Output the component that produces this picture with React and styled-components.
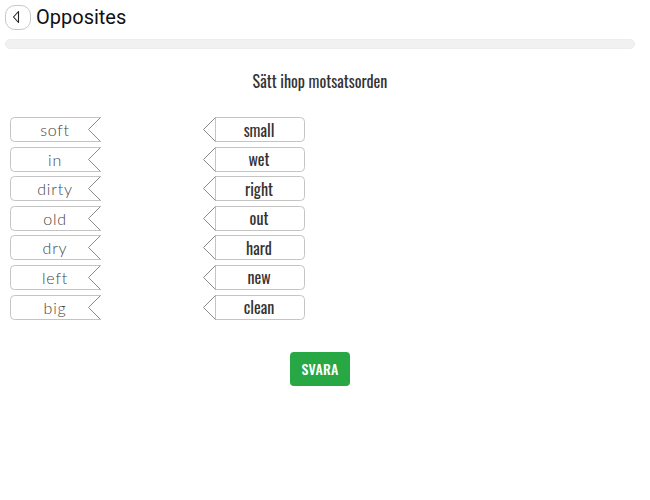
import React from "react";
import styled, { createGlobalStyle } from "styled-components";

const Global = createGlobalStyle`
  html, body { margin: 0; padding: 0; background: #fff; }
  body { font-family: Roboto, "Liberation Sans", sans-serif; }
`;

const Page = styled.div`
  padding: 4px 15px 0 5px;
  display: flex;
  flex-direction: column;
`;

const Header = styled.div`
  display: flex;
  align-items: center;
  gap: 5px;
  height: 26px;
`;

const BackButton = styled.button`
  width: 26px;
  height: 25px;
  border: 1px solid #c8c8c8;
  border-radius: 10px;
  background: #fff;
  padding: 0;
  display: flex;
  align-items: center;
  justify-content: center;
`;

const Title = styled.h1`
  margin: 0;
  font-family: Roboto, "Liberation Sans", sans-serif;
  font-weight: 400;
  font-size: 20px;
  color: #111;
  line-height: 26px;
`;

const Progress = styled.div`
  margin-top: 9px;
  height: 10px;
  border-radius: 5px;
  background: #f1f1f1;
  border: 1px solid #ececec;
  box-sizing: border-box;
`;

const Instruction = styled.div`
  margin-top: 20px;
  text-align: center;
  font-family: Oswald, "Liberation Sans Narrow", "DejaVu Sans Condensed", sans-serif;
  font-size: 16px;
  color: #333;
  line-height: 24px;
`;

const Board = styled.div`
  margin-top: 24px;
  margin-left: 5px;
  display: flex;
  gap: 102px;
`;

const Column = styled.div`
  display: flex;
  flex-direction: column;
  gap: 4.6px;
`;

const Tag = styled.div`
  position: relative;
  width: ${(p) => p.$w}px;
  height: 25px;
  box-sizing: border-box;
  display: flex;
  align-items: center;
  justify-content: center;
  padding: ${(p) => (p.$side === "left" ? "0 1px 0 0" : "0 0 0 10px")};
`;

const Outline = styled.svg`
  position: absolute;
  left: 0;
  top: 0;
  pointer-events: none;
`;

const LeftText = styled.span`
  position: relative;
  font-family: Lato, "Noto Sans", sans-serif;
  font-weight: 300;
  font-size: 16px;
  letter-spacing: 0.8px;
  color: #444;
`;

const RightText = styled.span`
  position: relative;
  font-family: Oswald, "Liberation Sans Narrow", "DejaVu Sans Condensed", sans-serif;
  font-size: 16px;
  color: #333;
`;

const Footer = styled.div`
  margin-top: 32px;
  display: flex;
  justify-content: center;
`;

const Submit = styled.button`
  width: 60px;
  height: 34px;
  border: none;
  border-radius: 4px;
  background: #28a745;
  color: #fff;
  font-family: Oswald, "Liberation Sans Narrow", "DejaVu Sans Condensed", sans-serif;
  font-size: 14px;
  font-weight: 500;
  letter-spacing: 0.2px;
  padding: 0;
`;

const leftWords = ["soft", "in", "dirty", "old", "dry", "left", "big"];
const rightWords = ["small", "wet", "right", "out", "hard", "new", "clean"];

function LeftTag({ word }) {
  return (
    <Tag $w={91} $side="left">
      <Outline width="91" height="25" viewBox="0 0 91 25">
        <path
          d="M90.5 0.5 H4.5 Q0.5 0.5 0.5 4.5 V20.5 Q0.5 24.5 4.5 24.5 H90.5"
          fill="none"
          stroke="#c4c4c4"
        />
        <path d="M90.5 0.5 L78.5 12.5 L90.5 24.5" fill="none" stroke="#8a8a8a" />
      </Outline>
      <LeftText>{word}</LeftText>
    </Tag>
  );
}

function RightTag({ word }) {
  return (
    <Tag $w={102} $side="right">
      <Outline width="102" height="25" viewBox="0 0 102 25">
        <path
          d="M12.5 0.5 H97.5 Q101.5 0.5 101.5 4.5 V20.5 Q101.5 24.5 97.5 24.5 H12.5 Z"
          fill="none"
          stroke="#c4c4c4"
        />
        <path d="M12.5 0.5 L0.5 12.5 L12.5 24.5" fill="none" stroke="#8a8a8a" />
      </Outline>
      <RightText>{word}</RightText>
    </Tag>
  );
}

export default function App() {
  return (
    <>
      <Global />
      <Page>
        <Header>
          <BackButton aria-label="Tillbaka">
            <svg width="12" height="14" viewBox="0 0 12 14">
              <path d="M1.5 7 L6.5 1.5 V12.5 Z" fill="none" stroke="#222" strokeWidth="1.1" strokeLinejoin="round" />
            </svg>
          </BackButton>
          <Title>Opposites</Title>
        </Header>
        <Progress />
        <Instruction>Sätt ihop motsatsorden</Instruction>
        <Board>
          <Column>
            {leftWords.map((w) => (
              <LeftTag key={w} word={w} />
            ))}
          </Column>
          <Column>
            {rightWords.map((w) => (
              <RightTag key={w} word={w} />
            ))}
          </Column>
        </Board>
        <Footer>
          <Submit>SVARA</Submit>
        </Footer>
      </Page>
    </>
  );
}
